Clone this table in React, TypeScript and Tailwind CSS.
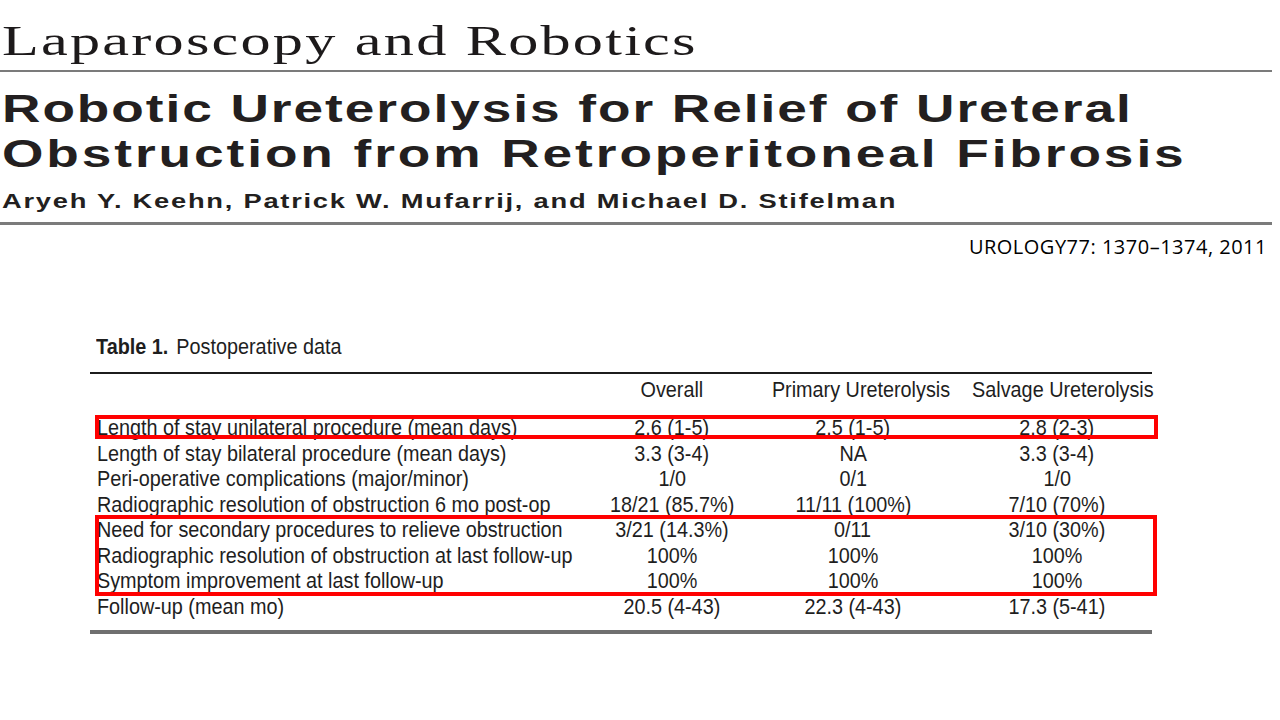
const rows: [string, string, string, string][] = [
  ["Length of stay unilateral procedure (mean days)", "2.6 (1-5)", "2.5 (1-5)", "2.8 (2-3)"],
  ["Length of stay bilateral procedure (mean days)", "3.3 (3-4)", "NA", "3.3 (3-4)"],
  ["Peri-operative complications (major/minor)", "1/0", "0/1", "1/0"],
  ["Radiographic resolution of obstruction 6 mo post-op", "18/21 (85.7%)", "11/11 (100%)", "7/10 (70%)"],
  ["Need for secondary procedures to relieve obstruction", "3/21 (14.3%)", "0/11", "3/10 (30%)"],
  ["Radiographic resolution of obstruction at last follow-up", "100%", "100%", "100%"],
  ["Symptom improvement at last follow-up", "100%", "100%", "100%"],
  ["Follow-up (mean mo)", "20.5 (4-43)", "22.3 (4-43)", "17.3 (5-41)"],
];

// condensed look: the table face is narrower than Liberation Sans
function Cell({ children, left }: { children: string; left?: boolean }) {
  return (
    <span className={left ? "inline-block origin-left scale-x-90" : "inline-block origin-center scale-x-90"}>
      {children}
    </span>
  );
}

export default function App() {
  return (
    <div className="relative h-[720px] w-[1280px] overflow-hidden bg-white text-[#231f20]">
      {/* journal section header */}
      <div className="h-[70px] pl-[2px] pt-[19px]">
        <span className="inline-block origin-left scale-x-[1.4] whitespace-nowrap font-['Liberation_Serif',serif] text-[43px] leading-[43px] tracking-[1.6px] text-[#1d1a1b]">
          Laparoscopy and Robotics
        </span>
      </div>
      <div className="h-[2px] w-[1272px] bg-[#7b7b7b]" />

      {/* article title */}
      <div className="mt-[15px] whitespace-nowrap pl-[2px] font-['Liberation_Sans',sans-serif] text-[38px] font-bold leading-[45px]">
        <div>
          <span className="inline-block origin-left scale-x-[1.4] tracking-[1.4px]">
            Robotic Ureterolysis for Relief of Ureteral
          </span>
        </div>
        <div>
          <span className="inline-block origin-left scale-x-[1.4] tracking-[2.1px]">
            Obstruction from Retroperitoneal Fibrosis
          </span>
        </div>
      </div>

      {/* authors */}
      <div className="mt-[12px] whitespace-nowrap pl-[2px] font-['Liberation_Sans',sans-serif] text-[19.5px] font-bold leading-[24px]">
        <span className="inline-block origin-left scale-x-[1.4] tracking-[1.25px]">
          Aryeh Y. Keehn, Patrick W. Mufarrij, and Michael D. Stifelman
        </span>
      </div>
      <div className="mt-[9px] h-[3px] w-[1272px] bg-[#7b7b7b]" />

      <div className="mt-[11px] whitespace-nowrap pr-[13px] text-right font-['Open_Sans',sans-serif] text-[20px] leading-[22px] tracking-[0.5px] text-black">
        UROLOGY77: 1370–1374, 2011
      </div>

      {/* table */}
      <div className="ml-[90px] mt-[77px] w-[1062px] font-['Liberation_Sans',sans-serif] text-[22px] text-[#1e1e1e]">
        <div className="h-[24px] whitespace-nowrap pl-[6px] leading-[24px]">
          <span className="inline-block origin-left scale-x-90">
            <span className="font-bold">Table 1.</span>
            <span className="ml-[9px]">Postoperative data</span>
          </span>
        </div>
        <div className="mt-[13px] h-[2px] bg-[#1c1c1c]" />
        <div className="grid h-[32px] grid-cols-[492px_180px_182px_208px] items-center whitespace-nowrap text-center leading-[26px]">
          <div />
          <div><Cell>Overall</Cell></div>
          <div><Cell>Primary Ureterolysis</Cell></div>
          <div className="pl-[18px]"><Cell>Salvage Ureterolysis</Cell></div>
        </div>
        <div className="mt-[9px]">
          {rows.map((r) => (
            <div
              key={r[0]}
              className="grid h-[25.5px] grid-cols-[492px_180px_182px_208px] items-center whitespace-nowrap leading-[25px]"
            >
              <div className="pl-[7px]"><Cell left>{r[0]}</Cell></div>
              <div className="text-center"><Cell>{r[1]}</Cell></div>
              <div className="text-center"><Cell>{r[2]}</Cell></div>
              <div className="pl-[18px] text-center"><Cell>{r[3]}</Cell></div>
            </div>
          ))}
        </div>
        <div className="mt-[11px] h-[4px] bg-[#6f6f6f]" />
      </div>

      {/* highlight boxes */}
      <div className="absolute left-[95px] top-[415px] h-[24px] w-[1063px] border-4 border-[#ff0000]" />
      <div className="absolute left-[95px] top-[515px] h-[81px] w-[1062px] border-4 border-[#ff0000]" />
    </div>
  );
}
